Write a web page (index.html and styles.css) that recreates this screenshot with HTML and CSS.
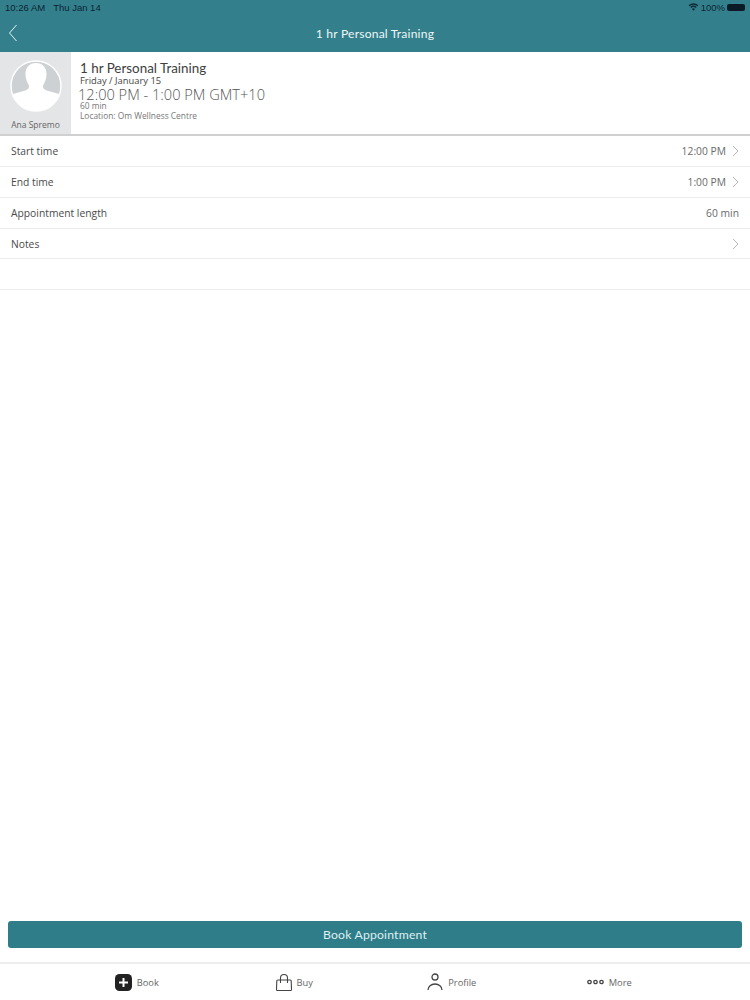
FILE: index.html
```html
<!DOCTYPE html>
<html lang="en">
<head>
<meta charset="utf-8">
<title>1 hr Personal Training</title>
<link rel="stylesheet" href="styles.css">
</head>
<body>
<div class="app">
  <header class="topbar">
    <div class="status">
      <span class="status-left"><span>10:26 AM</span><span>Thu Jan 14</span></span>
      <span class="status-right">
        <svg class="wifi" width="13" height="10" viewBox="0 0 13 10"><path d="M6.500 9.600 4.600 7.400a2.800 2.800 0 0 1 3.800 0zM3.600 6.300 2.500 5a6 6 0 0 1 8 0L9.400 6.300a4.400 4.400 0 0 0-5.800 0zM1.600 4.100.4 2.800a9 9 0 0 1 12.200 0l-1.200 1.300a7.300 7.300 0 0 0-9.800 0z"/></svg>
        <span>100%</span>
        <span class="battery"></span>
      </span>
    </div>
    <div class="navrow">
      <svg class="back" width="10" height="18" viewBox="0 0 10 18"><path d="M8.500 1 1.500 9l7 8" fill="none" stroke="#e6f2f3" stroke-width="1"/></svg>
      <div class="navtitle">1 hr Personal Training</div>
    </div>
  </header>

  <section class="summary">
    <div class="staff">
      <svg class="avatar" width="52" height="52" viewBox="0 0 52 52">
        <circle cx="26" cy="26" r="25" fill="#cdd1d4" stroke="#fff" stroke-width="1.500"/>
        <path d="M26 3c-6.500 0-10.500 4.500-10.500 11 0 4.500 1.500 8 3 10.500 1 2 .5 4-1.500 5.200-3 1.600-6 1.800-9 2.800-2 .6-4 1.300-5.700 1.500a25 25 0 0 0 47.400 0c-1.700-.2-3.700-.9-5.700-1.500-3-1-6-1.200-9-2.800-2-1.200-2.500-3.200-1.500-5.200 1.500-2.500 3-6 3-10.500C36.500 7.500 32.500 3 26 3z" fill="#fff"/>
      </svg>
      <div class="staff-name">Ana Spremo</div>
    </div>
    <div class="details">
      <div class="d-title">1 hr Personal Training</div>
      <div class="d-date">Friday / January 15</div>
      <div class="d-time">12:00 PM - 1:00 PM GMT+10</div>
      <div class="d-small d-len">60 min</div>
      <div class="d-small d-loc">Location: Om Wellness Centre</div>
    </div>
  </section>

  <ul class="rows">
    <li class="row"><span class="label">Start time</span><span class="value">12:00 PM<svg class="chev" width="7" height="12" viewBox="0 0 7 12"><path d="M1 1l5 5-5 5" fill="none" stroke="#b5b5b5" stroke-width="1"/></svg></span></li>
    <li class="row"><span class="label">End time</span><span class="value">1:00 PM<svg class="chev" width="7" height="12" viewBox="0 0 7 12"><path d="M1 1l5 5-5 5" fill="none" stroke="#b5b5b5" stroke-width="1"/></svg></span></li>
    <li class="row"><span class="label">Appointment length</span><span class="value">60 min</span></li>
    <li class="row row-short"><span class="label">Notes</span><span class="value"><svg class="chev" width="7" height="12" viewBox="0 0 7 12"><path d="M1 1l5 5-5 5" fill="none" stroke="#b5b5b5" stroke-width="1"/></svg></span></li>
    <li class="row"></li>
  </ul>

  <div class="cta"><button class="book" type="button">Book Appointment</button></div>

  <nav class="tabs">
    <div class="tab">
      <svg width="17" height="17" viewBox="0 0 17 17"><rect width="17" height="17" rx="4.500" fill="#222"/><path d="M8.500 4v9M4 8.500h9" stroke="#fff" stroke-width="2"/></svg>
      <span>Book</span>
    </div>
    <div class="tab">
      <svg width="16" height="17" viewBox="0 0 16 17"><path d="M1.800 6h12.400a1 1 0 0 1 1 1l.3 8.200a1 1 0 0 1-1 1.300H1.500a1 1 0 0 1-1-1.300L.8 7a1 1 0 0 1 1-1z" fill="none" stroke="#444" stroke-width="1.100"/><path d="M4.500 9V4a3.500 3.500 0 0 1 7 0v5" fill="none" stroke="#444" stroke-width="1.100"/></svg>
      <span>Buy</span>
    </div>
    <div class="tab">
      <svg width="16" height="18" viewBox="0 0 16 18"><circle cx="8" cy="4" r="3" fill="none" stroke="#444" stroke-width="1.300"/><path d="M1 17c0-3.500 3-6 7-6s7 2.500 7 6" fill="none" stroke="#444" stroke-width="1.300"/></svg>
      <span>Profile</span>
    </div>
    <div class="tab">
      <svg width="17" height="6" viewBox="0 0 17 6"><g fill="none" stroke="#444" stroke-width="1.300"><circle cx="2.500" cy="3" r="1.700"/><circle cx="8.500" cy="3" r="1.700"/><circle cx="14.500" cy="3" r="1.700"/></g></svg>
      <span>More</span>
    </div>
  </nav>
</div>
</body>
</html>
```
FILE: styles.css
```css
* { box-sizing: border-box; }
html, body { margin: 0; padding: 0; }
body { font-family: "Open Sans", "Liberation Sans", sans-serif; background: #fff; color: #333; }
.app { width: 750px; height: 1000px; display: flex; flex-direction: column; overflow: hidden; }

.topbar { height: 52px; background: #33808c; flex: none; }
.status { height: 14px; padding: 0 5px; display: flex; justify-content: space-between; align-items: center; font-family: "Liberation Sans", sans-serif; font-size: 9.500px; color: #0b2433; }
.status-left { display: flex; gap: 8px; }
.status-right { display: flex; align-items: center; gap: 2px; }
.wifi { fill: #0f2a3a; width: 11px; height: 8px; }
.battery { width: 18px; height: 7px; background: #0a1a26; border-radius: 2px; }
.navrow { height: 38px; display: flex; align-items: center; justify-content: center; position: relative; }
.back { position: absolute; left: 8px; top: 10px; }
.navtitle { color: #eef6f7; font-family: Lato, "Open Sans", sans-serif; font-size: 12.100px; letter-spacing: .2px; }

.summary { height: 84px; display: flex; flex: none; border-bottom: 2px solid #d0d0d0; }
.staff { width: 71px; background: #e4e5e6; display: flex; flex-direction: column; align-items: center; padding-top: 8px; }
.avatar { display: block; }
.staff-name { margin-top: 7px; font-size: 8.500px; color: #666; }
.details { padding: 8px 0 0 8px; flex: 1; }
.d-title { font-family: Lato, "Open Sans", sans-serif; font-size: 13.400px; line-height: 16px; color: #404040; padding-left: 1px; }
.d-date { font-size: 9.400px; line-height: 10px; color: #444; padding-left: 1px; }
.d-time { font-size: 14.600px; line-height: 16px; color: #555; font-weight: 300; margin-left: -1px; white-space: nowrap; }
.d-small { font-size: 8.400px; line-height: 11px; color: #777; padding-left: 1px; }
.d-len { line-height: 7px; }
.d-loc { margin-top: 1px; }

.rows { list-style: none; margin: 0; padding: 0; flex: none; }
.row { height: 31px; padding: 0 11px; display: flex; justify-content: space-between; align-items: center; border-bottom: 1px solid #ececec; font-size: 10.300px; }
.row-short { height: 30px; }
.label { color: #4a4a4a; }
.value { color: #6a6a6a; display: flex; align-items: center; gap: 6px; }
.chev { display: block; }

.cta { margin-top: auto; padding: 0 8px 14px; flex: none; }
.book { display: block; width: 100%; height: 27px; background: #2f7d89; border: 0; border-radius: 3px; color: #dff0f2; font-family: Lato, "Open Sans", sans-serif; font-size: 12.200px; letter-spacing: .2px; }

.tabs { height: 38px; flex: none; border-top: 2px solid #eeeeee; display: grid; grid-template-columns: repeat(4, 157.500px); padding: 0 61px 0 58px; align-items: center; }
.tab { display: flex; align-items: center; justify-content: center; gap: 5px; font-size: 9.300px; color: #666; }
```
